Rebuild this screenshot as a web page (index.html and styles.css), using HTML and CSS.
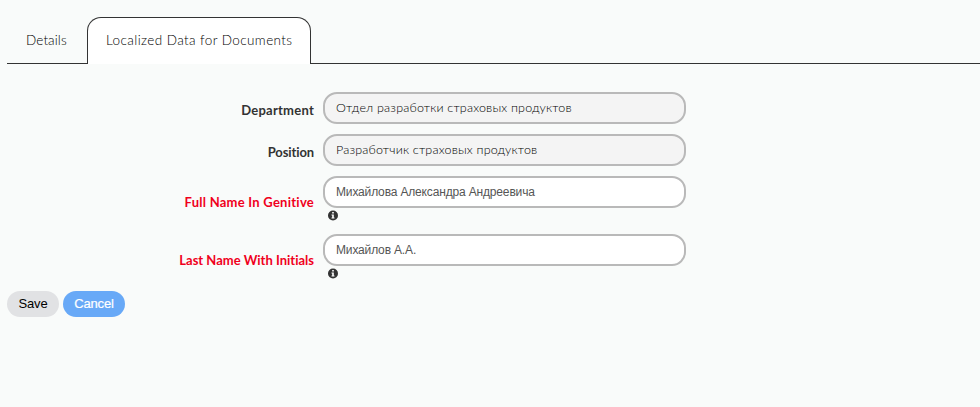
FILE: index.html
```html
<!DOCTYPE html>
<html lang="en">
<head>
<meta charset="utf-8">
<title>Localized Data for Documents</title>
<link rel="stylesheet" href="styles.css">
</head>
<body>
<nav class="tabs">
  <div class="tab"><span class="t-details">Details</span></div>
  <div class="tab active"><span class="t-local">Localized Data for Documents</span></div>
</nav>
<main class="form">
  <div class="row">
    <label class="label l-dep">Department</label>
    <div class="field readonly"><span class="v-dep">Отдел разработки страховых продуктов</span></div>
  </div>
  <div class="row">
    <label class="label l-pos">Position</label>
    <div class="field readonly"><span class="v-pos">Разработчик страховых продуктов</span></div>
  </div>
  <div class="row hinted">
    <label class="label required l-full">Full Name In Genitive</label>
    <div class="control">
      <div class="field"><span class="v-full">Михайлова Александра Андреевича</span></div>
      <svg class="info" viewBox="0 0 10 10"><circle cx="5" cy="5" r="5" fill="#333"/><path d="M4.2 1.5h1.6v1.5H4.2zM3.5 4h2.3v2.9h.7V8h-3V6.900h.7V5.100h-.7z" fill="#fff"/></svg>
    </div>
  </div>
  <div class="row hinted">
    <label class="label required l-last">Last Name With Initials</label>
    <div class="control">
      <div class="field"><span class="v-last">Михайлов А.А.</span></div>
      <svg class="info" viewBox="0 0 10 10"><circle cx="5" cy="5" r="5" fill="#333"/><path d="M4.2 1.5h1.6v1.5H4.2zM3.5 4h2.3v2.9h.7V8h-3V6.900h.7V5.100h-.7z" fill="#fff"/></svg>
    </div>
  </div>
</main>
<div class="actions">
  <button class="btn save">Save</button>
  <button class="btn cancel">Cancel</button>
</div>
</body>
</html>
```
FILE: styles.css
```css
* { box-sizing: border-box; }
body {
  margin: 0;
  padding: 17px 0 0 7px;
  background: #f9fbfa;
  color: #333;
  font-family: "Century Gothic", Lato, sans-serif;
  font-size: 13px;
  font-variant-ligatures: none;
  overflow: hidden;
}
.tabs { display: flex; height: 47px; border-bottom: 1px solid #333; }
.tab {
  width: 80px;
  height: 47px;
  padding-left: 19px;
  color: #000;
  font-size: 13.5px;
  line-height: 47px;
  font-weight: 300;
  white-space: nowrap;
}
.t-details { letter-spacing: .1px; }
.t-local { letter-spacing: .41px; }
.tab.active {
  width: 224px;
  padding-left: 18px;
  line-height: 45px;
  background: #fff;
  border: 1px solid #333;
  border-bottom: 0;
  border-radius: 14px 14px 0 0;
}
.form { display: grid; gap: 10px; padding-top: 28px; }
.row { display: grid; grid-template-columns: 308px 363px; column-gap: 8px; height: 32px; }
.row.hinted { height: 48px; }
.label {
  padding-top: 9px;
  padding-right: 1px;
  line-height: 18px;
  font-weight: 700;
  text-align: right;
  white-space: nowrap;
}
.l-dep { letter-spacing: .25px; }
.l-pos { letter-spacing: -.1px; }
.l-full { letter-spacing: .25px; }
.hinted .label { padding-top: 17px; }
.label.required { color: #f0001c; }
.field {
  height: 32px;
  padding: 0 11px;
  border: 2px solid #b9b9b9;
  border-radius: 14px;
  background: #fff;
  color: #555;
  font: 12px/28px "Liberation Sans", sans-serif;
  letter-spacing: -.16px;
  white-space: nowrap;
}
.field.readonly {
  background: #f4f4f4;
  color: #000;
  font: 300 12.5px/28px "Century Gothic", Lato, sans-serif;
  letter-spacing: .2px;
}
.info { display: block; width: 10px; height: 11px; margin: 2px 0 0 5px; }
.actions { display: flex; gap: 4px; margin-top: 9px; }
.btn {
  width: 52px;
  height: 26px;
  padding: 0;
  border: 0;
  border-radius: 13px;
  background: #e1e2e4;
  color: #000;
  font: 13px/26px "Liberation Sans", sans-serif;
  letter-spacing: -.15px;
}
.btn.cancel { width: 62px; background: #68a9f7; color: #fff; -webkit-text-stroke: .2px #fff; }
```
